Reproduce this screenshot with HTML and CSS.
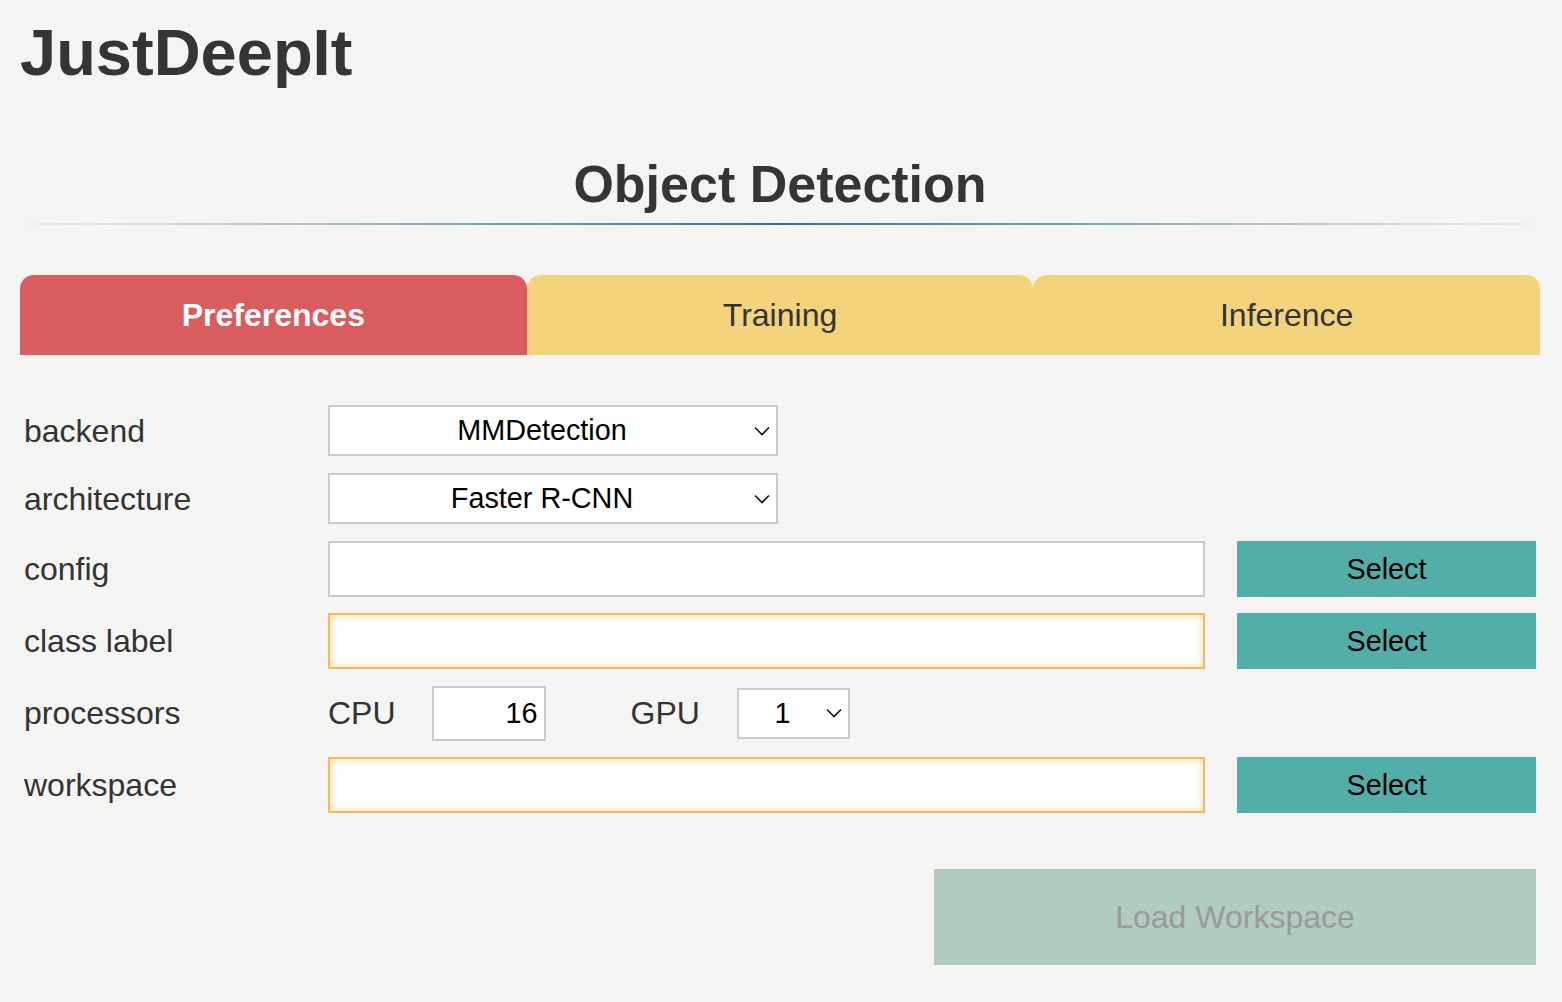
FILE: index.html
```html
<!DOCTYPE html>
<html lang="en">
<head>
<meta charset="utf-8">
<title>JustDeepIt</title>
<link rel="stylesheet" href="styles.css">
</head>
<body>
<div class="page">
  <h1 class="brand">JustDeepIt</h1>
  <h2 class="module-title">Object Detection</h2>
  <div class="divider"></div>

  <nav class="tabs">
    <div class="tab tab-active">Preferences</div>
    <div class="tab">Training</div>
    <div class="tab">Inference</div>
  </nav>

  <form class="form">
    <div class="row row-select">
      <label class="label">backend</label>
      <div class="select select-wide">
        <span class="select-value">MMDetection</span>
        <svg class="chev" viewBox="0 0 16 10" width="16" height="10"><polyline points="1,1.5 8,8.5 15,1.5" fill="none" stroke="#111" stroke-width="1.6"/></svg>
      </div>
    </div>
    <div class="row row-select">
      <label class="label">architecture</label>
      <div class="select select-wide">
        <span class="select-value">Faster R-CNN</span>
        <svg class="chev" viewBox="0 0 16 10" width="16" height="10"><polyline points="1,1.5 8,8.5 15,1.5" fill="none" stroke="#111" stroke-width="1.6"/></svg>
      </div>
    </div>
    <div class="row">
      <label class="label">config</label>
      <div class="text-input"></div>
      <div class="btn-select">Select</div>
    </div>
    <div class="row">
      <label class="label">class label</label>
      <div class="text-input text-input-required"></div>
      <div class="btn-select">Select</div>
    </div>
    <div class="row row-proc">
      <label class="label">processors</label>
      <span class="sub-label">CPU</span>
      <div class="num-input">16</div>
      <span class="sub-label sub-label-gpu">GPU</span>
      <div class="select select-small">
        <span class="select-value">1</span>
        <svg class="chev" viewBox="0 0 16 10" width="16" height="10"><polyline points="1,1.5 8,8.5 15,1.5" fill="none" stroke="#111" stroke-width="1.6"/></svg>
      </div>
    </div>
    <div class="row">
      <label class="label">workspace</label>
      <div class="text-input text-input-required"></div>
      <div class="btn-select">Select</div>
    </div>
    <div class="actions">
      <div class="btn-load">Load Workspace</div>
    </div>
  </form>
</div>
</body>
</html>
```

FILE: styles.css
```css
html, body {
  margin: 0;
  padding: 0;
  background: #f4f4f2;
}

body {
  font-family: "Liberation Sans", Arial, Helvetica, sans-serif;
  color: #333;
}

.page {
  padding: 0 22px 0 20px;
}

.brand {
  margin: 0;
  padding-top: 21px;
  font-size: 65px;
  line-height: 64px;
  font-weight: bold;
  color: #353535;
}

.module-title {
  margin: 73px 0 0;
  font-size: 52px;
  line-height: 52px;
  font-weight: bold;
  text-align: center;
  color: #353535;
}

.divider {
  margin: 13px -12px 0;
  height: 2px;
  background: linear-gradient(to right, rgba(47, 112, 144, 0), #2f7090 50%, rgba(47, 112, 144, 0));
}

.tabs {
  display: flex;
  margin-top: 50px;
}

.tab {
  flex: 1;
  height: 80px;
  line-height: 80px;
  text-align: center;
  font-size: 32px;
  background: #f3d47c;
  color: #333;
  border-radius: 14px 14px 0 0;
}

.tab-active {
  background: #d95c5f;
  color: #fff;
  font-weight: bold;
}

.form {
  margin: 50px 0 0;
  padding: 0 4px;
  display: flex;
  flex-direction: column;
  gap: 16px;
}

.row {
  display: flex;
  align-items: center;
  gap: 32px;
}

.row-select {
  height: 52px;
  align-items: flex-start;
}

.row-select .label {
  line-height: 52px;
}

.row-proc {
  height: 56px;
}

.label {
  width: 304px;
  margin-right: -32px;
  flex: none;
  font-size: 32px;
  color: #333;
}

.select {
  box-sizing: border-box;
  height: 51px;
  display: flex;
  align-items: center;
  background: #fff;
  border: 2px solid #cbcbcb;
  font-size: 28.8px;
  color: #000;
}

.select-wide {
  width: 450px;
}

.select-small {
  width: 113px;
  margin-left: -3px;
}

.select-value {
  flex: 1;
  text-align: center;
}

.chev {
  flex: none;
  margin-right: 6px;
  display: block;
}

.text-input {
  box-sizing: border-box;
  flex: 1;
  height: 56px;
  background: #fff;
  border: 2px solid #cbcbcb;
}

.text-input-required {
  border-color: #f5b957;
  box-shadow: inset 0 0 10px rgba(250, 196, 90, 0.5);
}

.btn-select {
  flex: none;
  width: 299px;
  height: 56px;
  line-height: 56px;
  text-align: center;
  background: #53ada9;
  color: #000;
  font-size: 28.8px;
}

.sub-label {
  font-size: 32px;
  color: #333;
  margin-right: 4px;
}

.sub-label-gpu {
  margin-left: 53px;
  margin-right: 8px;
}

.num-input {
  box-sizing: border-box;
  width: 114px;
  height: 55px;
  line-height: 51px;
  padding-right: 6px;
  text-align: right;
  background: #fff;
  border: 2px solid #cbcbcb;
  font-size: 28.8px;
  color: #000;
}

.actions {
  display: flex;
  justify-content: flex-end;
  margin-top: 40px;
}

.btn-load {
  width: 602px;
  height: 96px;
  line-height: 96px;
  text-align: center;
  background: #b1cbbe;
  color: #9a9a9a;
  font-size: 32px;
}
```
